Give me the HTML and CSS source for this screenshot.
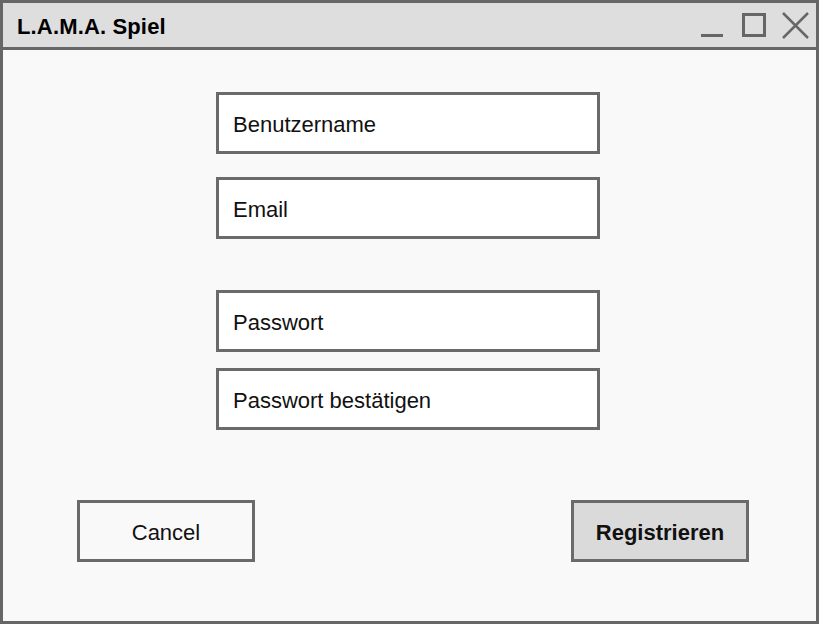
FILE: index.html
```html
<!DOCTYPE html>
<html lang="de">
<head>
<meta charset="utf-8">
<title>L.A.M.A. Spiel</title>
<link rel="stylesheet" href="styles.css">
</head>
<body>
<div class="window">
  <header class="titlebar">
    <span class="title">L.A.M.A. Spiel</span>
    <svg class="controls" width="120" height="44" viewBox="0 0 120 44" aria-hidden="true">
      <line x1="5" y1="32.5" x2="27" y2="32.5" stroke="#666" stroke-width="3"/>
      <rect x="47.5" y="11.5" width="21" height="21" fill="none" stroke="#666" stroke-width="3"/>
      <line x1="87" y1="10" x2="112" y2="35" stroke="#666" stroke-width="2.5"/>
      <line x1="112" y1="10" x2="87" y2="35" stroke="#666" stroke-width="2.5"/>
    </svg>
  </header>
  <main class="content">
    <div class="fields">
      <div class="field f1">Benutzername</div>
      <div class="field f2">Email</div>
      <div class="field f3">Passwort</div>
      <div class="field f4">Passwort bestätigen</div>
    </div>
    <div class="actions">
      <button class="btn">Cancel</button>
      <button class="btn primary">Registrieren</button>
    </div>
  </main>
</div>
</body>
</html>
```
FILE: styles.css
```css
* { box-sizing: border-box; }
html, body {
  margin: 0;
  padding: 0;
  width: 819px;
  height: 624px;
  overflow: hidden;
  font-family: "Liberation Sans", Arial, sans-serif;
  color: #000;
}
.window {
  width: 819px;
  height: 624px;
  border: 3px solid #666;
  background: #f9f9f9;
  display: flex;
  flex-direction: column;
}
.titlebar {
  height: 47px;
  flex: none;
  background: #dedede;
  border-bottom: 3px solid #666;
  display: flex;
  align-items: center;
  justify-content: space-between;
  padding-left: 14px;
}
.title {
  font-weight: bold;
  font-size: 22px;
  line-height: 44px;
  padding-top: 4px;
  letter-spacing: 0.15px;
}
.controls { display: block; }
.content {
  flex: 1;
  display: flex;
  flex-direction: column;
}
.fields {
  display: flex;
  flex-direction: column;
  padding-left: 213px;
  padding-top: 42px;
}
.field {
  width: 384px;
  height: 62px;
  border: 3px solid #6a6a6a;
  background: #fff;
  font-size: 22px;
  padding-left: 14px;
  padding-top: 4px;
  display: flex;
  align-items: center;
  color: #111;
}
.f2 { margin-top: 23px; }
.f3 { margin-top: 51px; }
.f4 { margin-top: 16px; }
.actions {
  display: flex;
  justify-content: space-between;
  padding: 0 67px 0 74px;
  margin-top: 70px;
}
.btn {
  width: 178px;
  height: 62px;
  border: 3px solid #6a6a6a;
  background: #f9f9f9;
  font-family: inherit;
  font-size: 22px;
  color: #111;
  padding: 4px 0 0 0;
}
.btn.primary {
  background: #dadada;
  font-weight: bold;
}
```
